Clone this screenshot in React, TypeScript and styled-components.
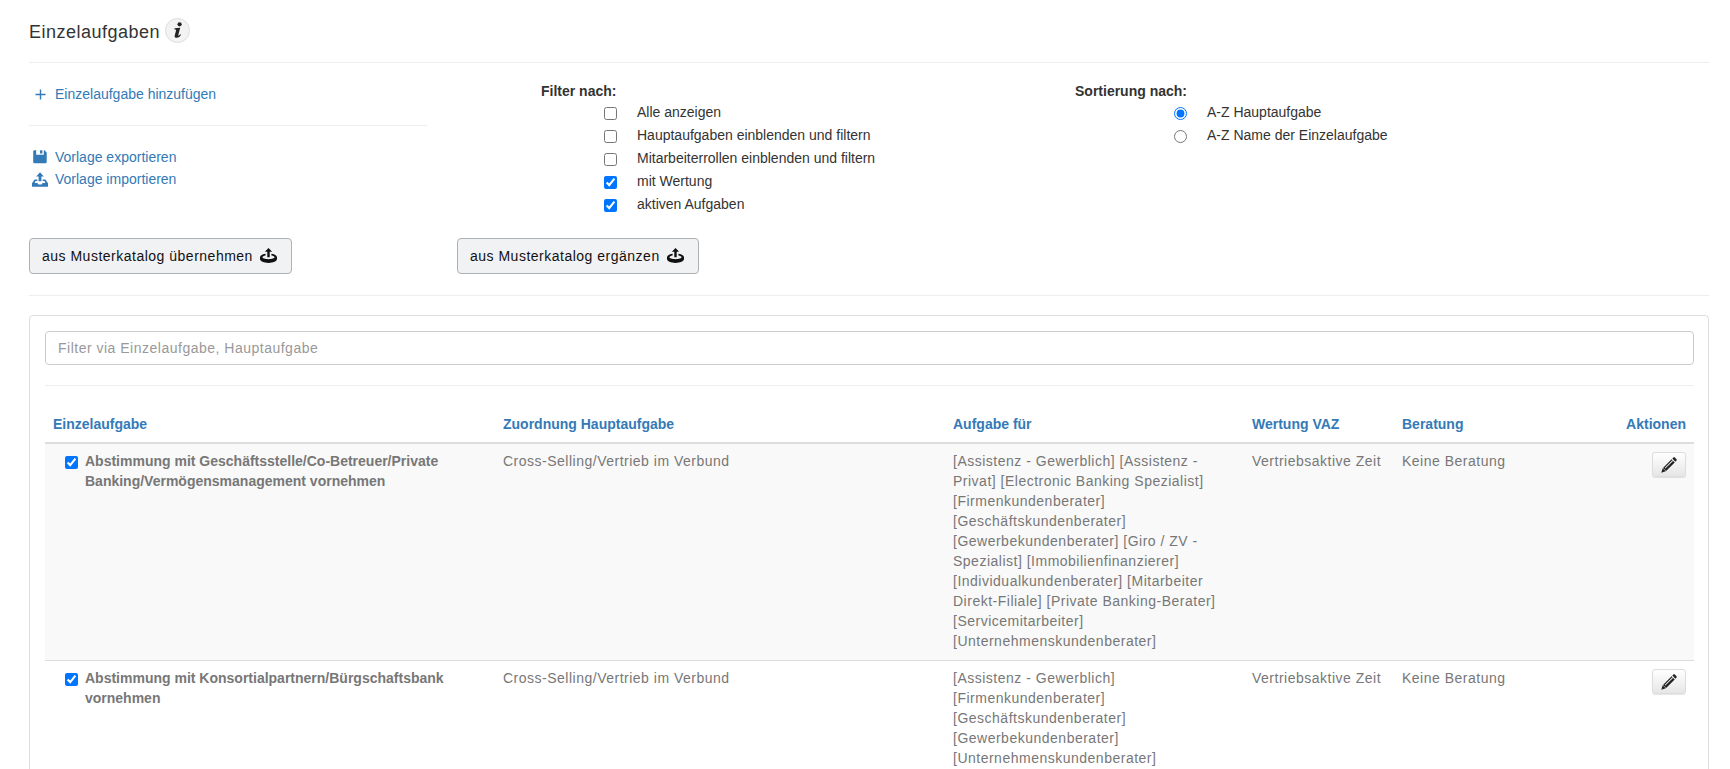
import React from 'react';
import styled, { createGlobalStyle } from 'styled-components';

const GlobalStyle = createGlobalStyle`
  html, body {
    margin: 0;
    padding: 0;
    height: 769px;
    overflow: hidden;
    background: #fff;
  }
  body {
    font-family: "Liberation Sans", Arial, sans-serif;
    font-size: 14px;
    line-height: 20px;
    color: #333;
  }
  * {
    box-sizing: border-box;
  }
`;

const filters = [
  { label: 'Alle anzeigen', checked: false },
  { label: 'Hauptaufgaben einblenden und filtern', checked: false },
  { label: 'Mitarbeiterrollen einblenden und filtern', checked: false },
  { label: 'mit Wertung', checked: true },
  { label: 'aktiven Aufgaben', checked: true },
];

const rows = [
  {
    name: 'Abstimmung mit Geschäftsstelle/Co-Betreuer/Private Banking/Vermögensmanagement vornehmen',
    main: 'Cross-Selling/Vertrieb im Verbund',
    roles:
      '[Assistenz - Gewerblich] [Assistenz - Privat] [Electronic Banking Spezialist] [Firmenkundenberater] [Geschäftskundenberater] [Gewerbekundenberater] [Giro / ZV - Spezialist] [Immobilienfinanzierer] [Individualkundenberater] [Mitarbeiter Direkt-Filiale] [Private Banking-Berater] [Servicemitarbeiter] [Unternehmenskundenberater]',
  },
  {
    name: 'Abstimmung mit Konsortialpartnern/Bürgschaftsbank vornehmen',
    main: 'Cross-Selling/Vertrieb im Verbund',
    roles:
      '[Assistenz - Gewerblich] [Firmenkundenberater] [Geschäftskundenberater] [Gewerbekundenberater] [Unternehmenskundenberater]',
  },
];

const PlusIcon = () => (
  <svg width="11" height="11" viewBox="0 0 11 11" fill="#337ab7">
    <path d="M4.8 0.5h1.4v4.3h4.3v1.4H6.2v4.3H4.8V6.2H0.5V4.8h4.3z" />
  </svg>
);

const SaveIcon = () => (
  <svg width="14" height="14" viewBox="0 0 14 14" fill="#337ab7">
    <path d="M1.5 0.3h1.7v4.4h7.6V0.3h0.7L13.7 2.5V12a1.3 1.3 0 0 1-1.3 1.3H1.5A1.3 1.3 0 0 1 0.2 12V1.6A1.3 1.3 0 0 1 1.5 0.3z" />
    <path d="M7 0.3h2.4v3.2H7z" />
  </svg>
);

const TrayUpIcon = ({ color }: { color: string }) => (
  <svg width="16" height="15" viewBox="0 0 16 15" fill={color}>
    <path d="M8 0.2l3.8 4.2H9.4v4.8H6.6V4.4H4.2z" />
    <path d="M0 11.2l2.6-3.6h2.8v1.4H3.6l-1 1.9h2.8l1 1.5h3.2l1-1.5h2.8l-1-1.9h-1.8V7.6h2.8L16 11.2v3.6H0z" />
  </svg>
);

const CatalogIcon = () => (
  <svg width="17" height="16" viewBox="0 0 17 16" fill="#111">
    <path d="M8.5 0l3.6 3.8H9.7v5.4H7.3V3.8H4.9z" />
    <path d="M5.6 5.8v1.7C3.8 7.9 2.4 8.6 2.4 9.3c0 0.8 2.7 1.9 6.1 1.9s6.1-1.1 6.1-1.9c0-0.7-1.4-1.4-3.2-1.8V5.8C14.4 6.2 17 7.6 17 9.3v1.8c0 2.1-4 3.9-8.5 3.9S0 13.2 0 11.1V9.3C0 7.6 2.6 6.2 5.6 5.8z" />
  </svg>
);

const InfoIcon = () => (
  <svg width="12" height="17" viewBox="0 0 12 17" fill="#222">
    <circle cx="7.6" cy="2.3" r="2.1" />
    <path d="M2.6 6.2l5.6-0.4-2 7.4c-0.1 0.5 0.2 0.6 0.5 0.4 0.5-0.3 1-0.8 1.4-1.4l0.9 0.6c-0.9 1.7-2.4 3-4.3 3-1.6 0-2.3-0.8-2-2.1l1.4-5.4c0.1-0.5-0.1-0.8-0.7-0.8H2.3z" />
  </svg>
);

const PencilIcon = () => (
  <svg width="16" height="16" viewBox="0 0 16 16" fill="#222">
    <path d="M12.4 0.5c0.4-0.4 1-0.4 1.4 0l1.7 1.7c0.4 0.4 0.4 1 0 1.4l-1.1 1.1-3.1-3.1z" />
    <path d="M10.6 2.3l3.1 3.1-8.6 8.6-3.1-3.1zM3.7 10.9l0.7 0.7 7.6-7.6-0.7-0.7z" fillRule="evenodd" />
    <path d="M1.7 11.2l3.1 3.1-4.5 1.4z" />
  </svg>
);

const App = () => {
  return (
    <>
      <GlobalStyle />
      <Page>
        <TitleRow>
          <Title>Einzelaufgaben</Title>
          <InfoBadge>
            <InfoIcon />
          </InfoBadge>
        </TitleRow>
        <Divider />

        <TopRow>
          <ActionsColumn>
            <ActionLink $indent={6} $gap={9}>
              <PlusIcon />
              Einzelaufgabe hinzufügen
            </ActionLink>
            <ShortDivider />
            <ActionLink $indent={4} $gap={8}>
              <SaveIcon />
              Vorlage exportieren
            </ActionLink>
            <ActionLink $indent={3} $gap={7}>
              <TrayUpIcon color="#337ab7" />
              Vorlage importieren
            </ActionLink>
          </ActionsColumn>

          <OptionsColumn $width={534}>
            <OptionsHeading>Filter nach:</OptionsHeading>
            {filters.map((item) => (
              <OptionRow key={item.label} $indent={63}>
                <OptionInput type="checkbox" defaultChecked={item.checked} />
                {item.label}
              </OptionRow>
            ))}
          </OptionsColumn>

          <OptionsColumn $width={400}>
            <OptionsHeading>Sortierung nach:</OptionsHeading>
            <OptionRow $indent={99}>
              <OptionInput type="radio" name="sort" defaultChecked />
              A-Z Hauptaufgabe
            </OptionRow>
            <OptionRow $indent={99}>
              <OptionInput type="radio" name="sort" />
              A-Z Name der Einzelaufgabe
            </OptionRow>
          </OptionsColumn>
        </TopRow>

        <ButtonRow>
          <CatalogButton>
            aus Musterkatalog übernehmen
            <CatalogIcon />
          </CatalogButton>
          <CatalogButton>
            aus Musterkatalog ergänzen
            <CatalogIcon />
          </CatalogButton>
        </ButtonRow>
        <Divider />

        <Card>
          <FilterInput placeholder="Filter via Einzelaufgabe, Hauptaufgabe" />
          <CardDivider />
          <TaskTable>
            <colgroup>
              <col style={{ width: 450 }} />
              <col style={{ width: 450 }} />
              <col style={{ width: 299 }} />
              <col style={{ width: 150 }} />
              <col style={{ width: 200 }} />
              <col style={{ width: 100 }} />
            </colgroup>
            <thead>
              <tr>
                <HeadCell>Einzelaufgabe</HeadCell>
                <HeadCell>Zuordnung Hauptaufgabe</HeadCell>
                <HeadCell>Aufgabe für</HeadCell>
                <HeadCell>Wertung VAZ</HeadCell>
                <HeadCell>Beratung</HeadCell>
                <HeadCell $right>Aktionen</HeadCell>
              </tr>
            </thead>
            <tbody>
              {rows.map((row, index) => (
                <TaskRow key={row.name} $striped={index % 2 === 0}>
                  <BodyCell>
                    <TaskName>
                      <RowCheckbox type="checkbox" defaultChecked />
                      <span>{row.name}</span>
                    </TaskName>
                  </BodyCell>
                  <BodyCell>{row.main}</BodyCell>
                  <BodyCell>{row.roles}</BodyCell>
                  <BodyCell>Vertriebsaktive Zeit</BodyCell>
                  <BodyCell>Keine Beratung</BodyCell>
                  <BodyCell $right>
                    <EditButton>
                      <PencilIcon />
                    </EditButton>
                  </BodyCell>
                </TaskRow>
              ))}
            </tbody>
          </TaskTable>
        </Card>
      </Page>
    </>
  );
};

export default App;

const Page = styled.div`
  padding: 0 21px 0 29px;
`;

const TitleRow = styled.div`
  display: flex;
  align-items: center;
  gap: 5px;
  height: 62px;
  padding-bottom: 1px;
`;

const Title = styled.h1`
  margin: 3px 0 0;
  font-size: 18px;
  line-height: 20px;
  font-weight: 400;
  letter-spacing: 0.5px;
  color: #333;
`;

const InfoBadge = styled.span`
  display: flex;
  align-items: center;
  justify-content: center;
  width: 25px;
  height: 25px;
  border-radius: 50%;
  background: #f3f3f3;
  border: 1px solid #ddd;
`;

const Divider = styled.hr`
  margin: 0;
  border: 0;
  border-top: 1px solid #eee;
`;

const ShortDivider = styled(Divider)`
  width: 398px;
  margin: 20px 0 20px;
`;

const TopRow = styled.div`
  display: flex;
  padding-top: 18px;
`;

const ActionsColumn = styled.div`
  width: 512px;
  padding-top: 2px;
`;

const ActionLink = styled.a<{ $indent: number; $gap: number }>`
  display: flex;
  align-items: center;
  gap: ${({ $gap }) => $gap}px;
  height: 22px;
  padding-left: ${({ $indent }) => $indent}px;
  color: #337ab7;
  cursor: pointer;
  svg {
    flex: none;
  }
`;

const OptionsColumn = styled.div<{ $width: number }>`
  width: ${({ $width }) => $width}px;
`;

const OptionsHeading = styled.div`
  font-weight: 700;
  height: 20px;
`;

const OptionRow = styled.label<{ $indent: number }>`
  display: flex;
  align-items: center;
  height: 23px;
  padding-left: ${({ $indent }) => $indent}px;
  padding-bottom: 1px;
`;

const OptionInput = styled.input`
  width: 13px;
  height: 13px;
  margin: 3px 20px 0 0;
  flex: none;
`;

const ButtonRow = styled.div`
  display: grid;
  grid-template-columns: 428px auto;
  justify-content: start;
  padding: 22px 0 21px;
`;

const CatalogButton = styled.button`
  display: inline-flex;
  align-items: center;
  justify-self: start;
  gap: 7px;
  height: 36px;
  padding: 0 14px 0 12px;
  font-family: inherit;
  font-size: 14px;
  letter-spacing: 0.5px;
  color: #111;
  background: #f1f2f4;
  border: 1px solid #aeb1b6;
  border-radius: 4px;
`;

const Card = styled.div`
  margin-top: 19px;
  height: 500px;
  padding: 15px 14px 15px 15px;
  border: 1px solid #ddd;
  border-radius: 4px;
`;

const FilterInput = styled.input`
  display: block;
  width: 100%;
  height: 34px;
  padding: 6px 12px;
  font-family: inherit;
  font-size: 14px;
  letter-spacing: 0.5px;
  color: #555;
  background: #fff;
  border: 1px solid #ccc;
  border-radius: 4px;
  &::placeholder {
    color: #999;
    opacity: 1;
  }
`;

const CardDivider = styled(Divider)`
  margin: 20px 0 0;
`;

const TaskTable = styled.table`
  width: 100%;
  margin-top: 19px;
  border-collapse: collapse;
  table-layout: fixed;
`;

const HeadCell = styled.th<{ $right?: boolean }>`
  padding: 8px;
  height: 38px;
  text-align: ${({ $right }) => ($right ? 'right' : 'left')};
  vertical-align: bottom;
  font-weight: 700;
  color: #337ab7;
  border-bottom: 2px solid #ddd;
`;

const TaskRow = styled.tr<{ $striped: boolean }>`
  background: ${({ $striped }) => ($striped ? '#f9f9f9' : '#fff')};
`;

const BodyCell = styled.td<{ $right?: boolean }>`
  padding: 7px 8px 9px;
  vertical-align: top;
  text-align: ${({ $right }) => ($right ? 'right' : 'left')};
  letter-spacing: 0.5px;
  color: #777;
  border-top: 1px solid #ddd;
`;

const TaskName = styled.label`
  display: flex;
  align-items: flex-start;
  gap: 7px;
  padding-left: 12px;
  font-weight: 700;
  letter-spacing: 0;
  color: #777;
`;

const RowCheckbox = styled.input`
  width: 13px;
  height: 13px;
  margin: 5px 0 0;
  flex: none;
`;

const EditButton = styled.button`
  display: inline-flex;
  align-items: center;
  justify-content: center;
  width: 34px;
  height: 25px;
  padding: 0;
  margin-top: 1px;
  background: linear-gradient(#fff, #e6e6e6);
  border: 1px solid #ddd;
  border-radius: 3px;
  box-shadow: 0 1px 1px rgba(0, 0, 0, 0.1);
`;
